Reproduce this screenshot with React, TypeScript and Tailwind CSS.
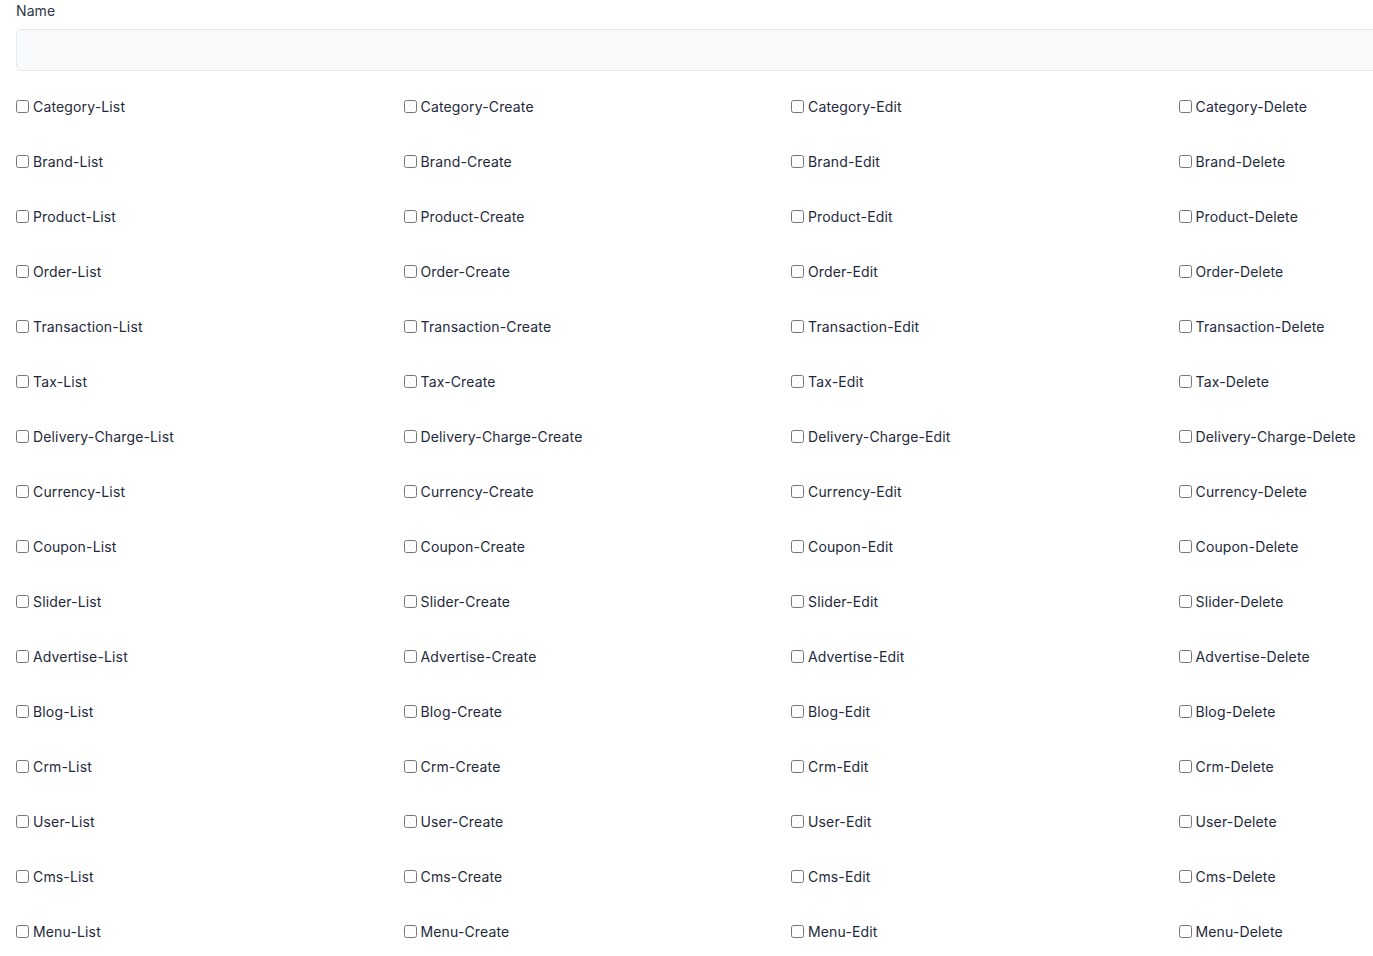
import React from "react";

const groups = [
  "Category",
  "Brand",
  "Product",
  "Order",
  "Transaction",
  "Tax",
  "Delivery-Charge",
  "Currency",
  "Coupon",
  "Slider",
  "Advertise",
  "Blog",
  "Crm",
  "User",
  "Cms",
  "Menu",
];
const actions = ["List", "Create", "Edit", "Delete"];

export default function App() {
  return (
    <div
      className="w-[1373px] h-[956px] overflow-hidden bg-white"
      style={{ fontFamily: "Inter, 'Noto Sans', sans-serif" }}
    >
      <div className="w-[1566px] pl-4">
        <label className="block text-[14px] leading-[20px] text-[#2d3748] tracking-[0.1px] pt-[1px]">Name</label>
        <input
          type="text"
          className="mt-[8px] block w-full h-[42px] rounded-[6px] border border-[#e2e8f0] bg-[#f8fafc] outline-none"
        />
        <div className="mt-[26px] grid grid-cols-4 gap-y-[35px]">
          {groups.map((g) =>
            actions.map((a) => (
              <label
                key={g + a}
                className="flex items-center gap-[4px] text-[14px] leading-[20px] text-[#1e293b] tracking-[0.15px]"
              >
                <input type="checkbox" className="m-0 w-[13px] h-[13px] -mt-[1px]" />
                <span>{`${g}-${a}`}</span>
              </label>
            ))
          )}
        </div>
      </div>
    </div>
  );
}
